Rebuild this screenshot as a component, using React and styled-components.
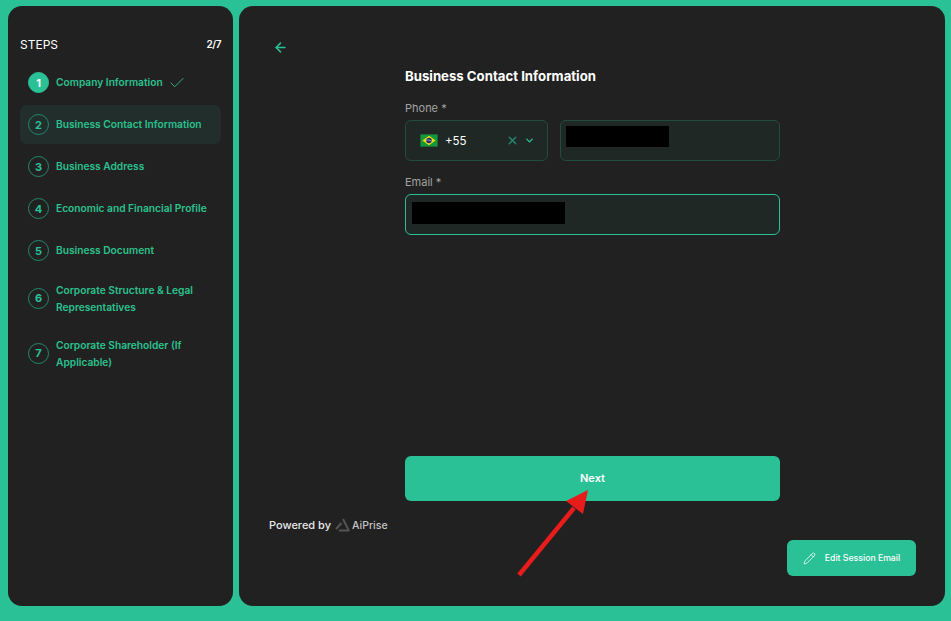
import React from "react";
import styled, { createGlobalStyle } from "styled-components";
import { ArrowLeft, Check, ChevronDown, Pencil, X } from "lucide-react";

const Global = createGlobalStyle`
  html, body { margin: 0; padding: 0; height: 100%; }
  body { background: #2bc197; font-family: Inter, "Liberation Sans", sans-serif; overflow: hidden; }
  * { box-sizing: border-box; }
`;

const Page = styled.div`
  position: relative;
  width: 951px;
  height: 621px;
  background: #2bc197;
  padding: 6px 6px 15px 8px;
  display: flex;
  gap: 6px;
`;

const Sidebar = styled.aside`
  width: 225px;
  background: #212121;
  border-radius: 14px;
  padding: 30px 12px 0;
`;

const StepsHeader = styled.div`
  display: flex;
  justify-content: space-between;
  align-items: center;
  height: 16px;
  margin-bottom: 11px;
  color: #fff;
  font-size: 12px;
  font-weight: 400;
`;

const StepsCount = styled.span`
  font-size: 10px;
  font-weight: 600;
  letter-spacing: -0.4px;
`;

const StepList = styled.ol`
  list-style: none;
  margin: 0;
  padding: 0;
  display: flex;
  flex-direction: column;
  gap: 3px;
`;

const Step = styled.li`
  display: flex;
  align-items: center;
  gap: 7px;
  padding: 9px 8px;
  border-radius: 7px;
  background: ${(p) => (p.$active ? "#212e2b" : "transparent")};
`;

const StepNumber = styled.span`
  flex: none;
  width: 21px;
  height: 21px;
  margin-bottom: ${(p) => (p.$tall ? "2px" : "0")};
  border-radius: 50%;
  display: flex;
  align-items: center;
  justify-content: center;
  border: 1px solid ${(p) => (p.$done ? "#2bc197" : "#23896d")};
  background: ${(p) => (p.$done ? "#2bc197" : "transparent")};
  color: ${(p) => (p.$done ? "#fff" : "#2bc197")};
  font-size: 11px;
  font-weight: 700;
`;

const StepLabel = styled.span`
  font-size: 10.2px;
  font-weight: 600;
  line-height: 17px;
  color: #2bc18f;
`;

const DoneMark = styled(Check)`
  flex: none;
  margin-left: -2px;
  color: #2bc197;
`;

const Main = styled.main`
  flex: 1;
  background: #212121;
  border-radius: 14px;
  display: grid;
  grid-template-columns: 166px 375px 1fr;
  grid-template-rows: 495px 1fr;
`;

const BackButton = styled.button`
  align-self: start;
  justify-self: start;
  margin: 34px 0 0 34px;
  padding: 0;
  background: none;
  border: 0;
  display: flex;
  color: #2bc197;
`;

const Form = styled.form`
  display: flex;
  flex-direction: column;
  padding-top: 62px;
  margin: 0;
`;

const Title = styled.h2`
  margin: 0 0 17px;
  font-size: 13.2px;
  line-height: 16px;
  font-weight: 700;
  color: #fff;
`;

const Label = styled.label`
  display: block;
  font-size: 11px;
  line-height: 14px;
  color: #a3a3a3;
  margin-bottom: 5px;
`;

const PhoneRow = styled.div`
  display: flex;
  gap: 12px;
  margin-bottom: 14px;
`;

const Field = styled.div`
  height: 41px;
  background: #202826;
  border: 1px solid ${(p) => (p.$focus ? "#2bc197" : "#1f4d3f")};
  border-radius: 6px;
  display: flex;
`;

const CountrySelect = styled(Field)`
  width: 143px;
  align-items: center;
  padding: 0 12px 0 14px;
  color: #fff;
  font-size: 11.5px;
`;

const PhoneInput = styled(Field)`
  width: 220px;
  align-items: flex-start;
  padding: 5px;
`;

const EmailInput = styled(Field)`
  width: 375px;
  align-items: flex-start;
  padding: 7px 6px;
`;

const DialCode = styled.span`
  margin-left: 7px;
  flex: 1;
`;

const Redacted = styled.span`
  display: block;
  width: ${(p) => p.$w}px;
  height: ${(p) => p.$h}px;
  background: #000;
`;

const ClearIcon = styled(X)`
  color: #23896d;
  margin-right: 5px;
`;

const OpenIcon = styled(ChevronDown)`
  color: #2bc197;
`;

const NextButton = styled.button`
  margin-top: auto;
  height: 45px;
  padding-bottom: 2px;
  border: 0;
  border-radius: 6px;
  background: #2bc197;
  color: #fff;
  font-family: Inter, sans-serif;
  font-size: 11px;
  font-weight: 600;
`;

const Powered = styled.div`
  grid-column: 1;
  grid-row: 2;
  align-self: start;
  margin: 17px 0 0 30px;
  display: flex;
  align-items: center;
  height: 14px;
  white-space: nowrap;
  font-size: 11px;
  font-weight: 500;
  color: #e8e8e8;
`;

const Brand = styled.span`
  display: flex;
  align-items: center;
  gap: 1px;
  margin-left: 4px;
  font-size: 10.5px;
  font-weight: 500;
  color: #c4c4c4;
`;

const EditButton = styled.button`
  grid-column: 3;
  grid-row: 2;
  align-self: start;
  justify-self: end;
  margin: 39px 29px 0 0;
  width: 129px;
  height: 36px;
  border: 0;
  border-radius: 6px;
  background: #2bc197;
  color: #fff;
  display: flex;
  align-items: center;
  justify-content: center;
  gap: 9px;
  font-family: Inter, sans-serif;
  font-size: 8.7px;
  font-weight: 500;
`;

const Annotation = styled.svg`
  position: absolute;
  left: 510px;
  top: 484px;
  pointer-events: none;
`;

const steps = [
  "Company Information",
  "Business Contact Information",
  "Business Address",
  "Economic and Financial Profile",
  "Business Document",
  "Corporate Structure & Legal Representatives",
  "Corporate Shareholder (If Applicable)",
];

const BrazilFlag = () => (
  <svg width="18" height="13" viewBox="0 0 18 13" aria-hidden="true">
    <rect width="18" height="13" fill="#333" />
    <rect x="0.5" y="0.5" width="17" height="12" fill="#109a3c" />
    <path d="M9 1.8 15.6 6.5 9 11.2 2.4 6.5Z" fill="#f4d90e" />
    <circle cx="9" cy="6.5" r="2.8" fill="#1c2f78" />
    <path d="M6.3 6q2.8-.5 5.4 1.2" stroke="#ddd" strokeWidth=".6" fill="none" />
  </svg>
);

const AiPriseLogo = () => (
  <svg width="16" height="15" viewBox="0 0 16 15" aria-hidden="true" fill="none" stroke="#555" strokeWidth="2">
    <path d="M1 11 6.5 5" />
    <path d="M8 1 14 13" />
    <path d="M4 12.5H14" />
  </svg>
);

export default function App() {
  return (
    <Page>
      <Global />
      <Sidebar>
        <StepsHeader>
          <span>STEPS</span>
          <StepsCount>2/7</StepsCount>
        </StepsHeader>
        <StepList>
          {steps.map((label, i) => (
            <Step key={label} $active={i === 1}>
              <StepNumber $done={i === 0} $tall={i >= 5}>{i + 1}</StepNumber>
              <StepLabel>{label}</StepLabel>
              {i === 0 && <DoneMark size={18} strokeWidth={1.2} />}
            </Step>
          ))}
        </StepList>
      </Sidebar>
      <Main>
        <BackButton type="button" aria-label="Back">
          <ArrowLeft size={15} strokeWidth={2.4} />
        </BackButton>
        <Form>
          <Title>Business Contact Information</Title>
          <Label>Phone *</Label>
          <PhoneRow>
            <CountrySelect>
              <BrazilFlag />
              <DialCode>+55</DialCode>
              <ClearIcon size={13} strokeWidth={2.5} />
              <OpenIcon size={11} strokeWidth={3} />
            </CountrySelect>
            <PhoneInput>
              <Redacted $w={103} $h={21} />
            </PhoneInput>
          </PhoneRow>
          <Label>Email *</Label>
          <EmailInput $focus>
            <Redacted $w={153} $h={22} />
          </EmailInput>
          <NextButton type="button">Next</NextButton>
        </Form>
        <Powered>
          Powered by
          <Brand>
            <AiPriseLogo />
            AiPrise
          </Brand>
        </Powered>
        <EditButton type="button">
          <Pencil size={13} strokeWidth={1.4} />
          Edit Session Email
        </EditButton>
      </Main>
      <Annotation width="84" height="96" viewBox="0 0 84 96" aria-hidden="true">
        <path d="M9 91 64 24" stroke="#e91c1c" strokeWidth="4.5" />
        <path d="M78 6 56 17 73 30Z" fill="#e91c1c" />
      </Annotation>
    </Page>
  );
}
